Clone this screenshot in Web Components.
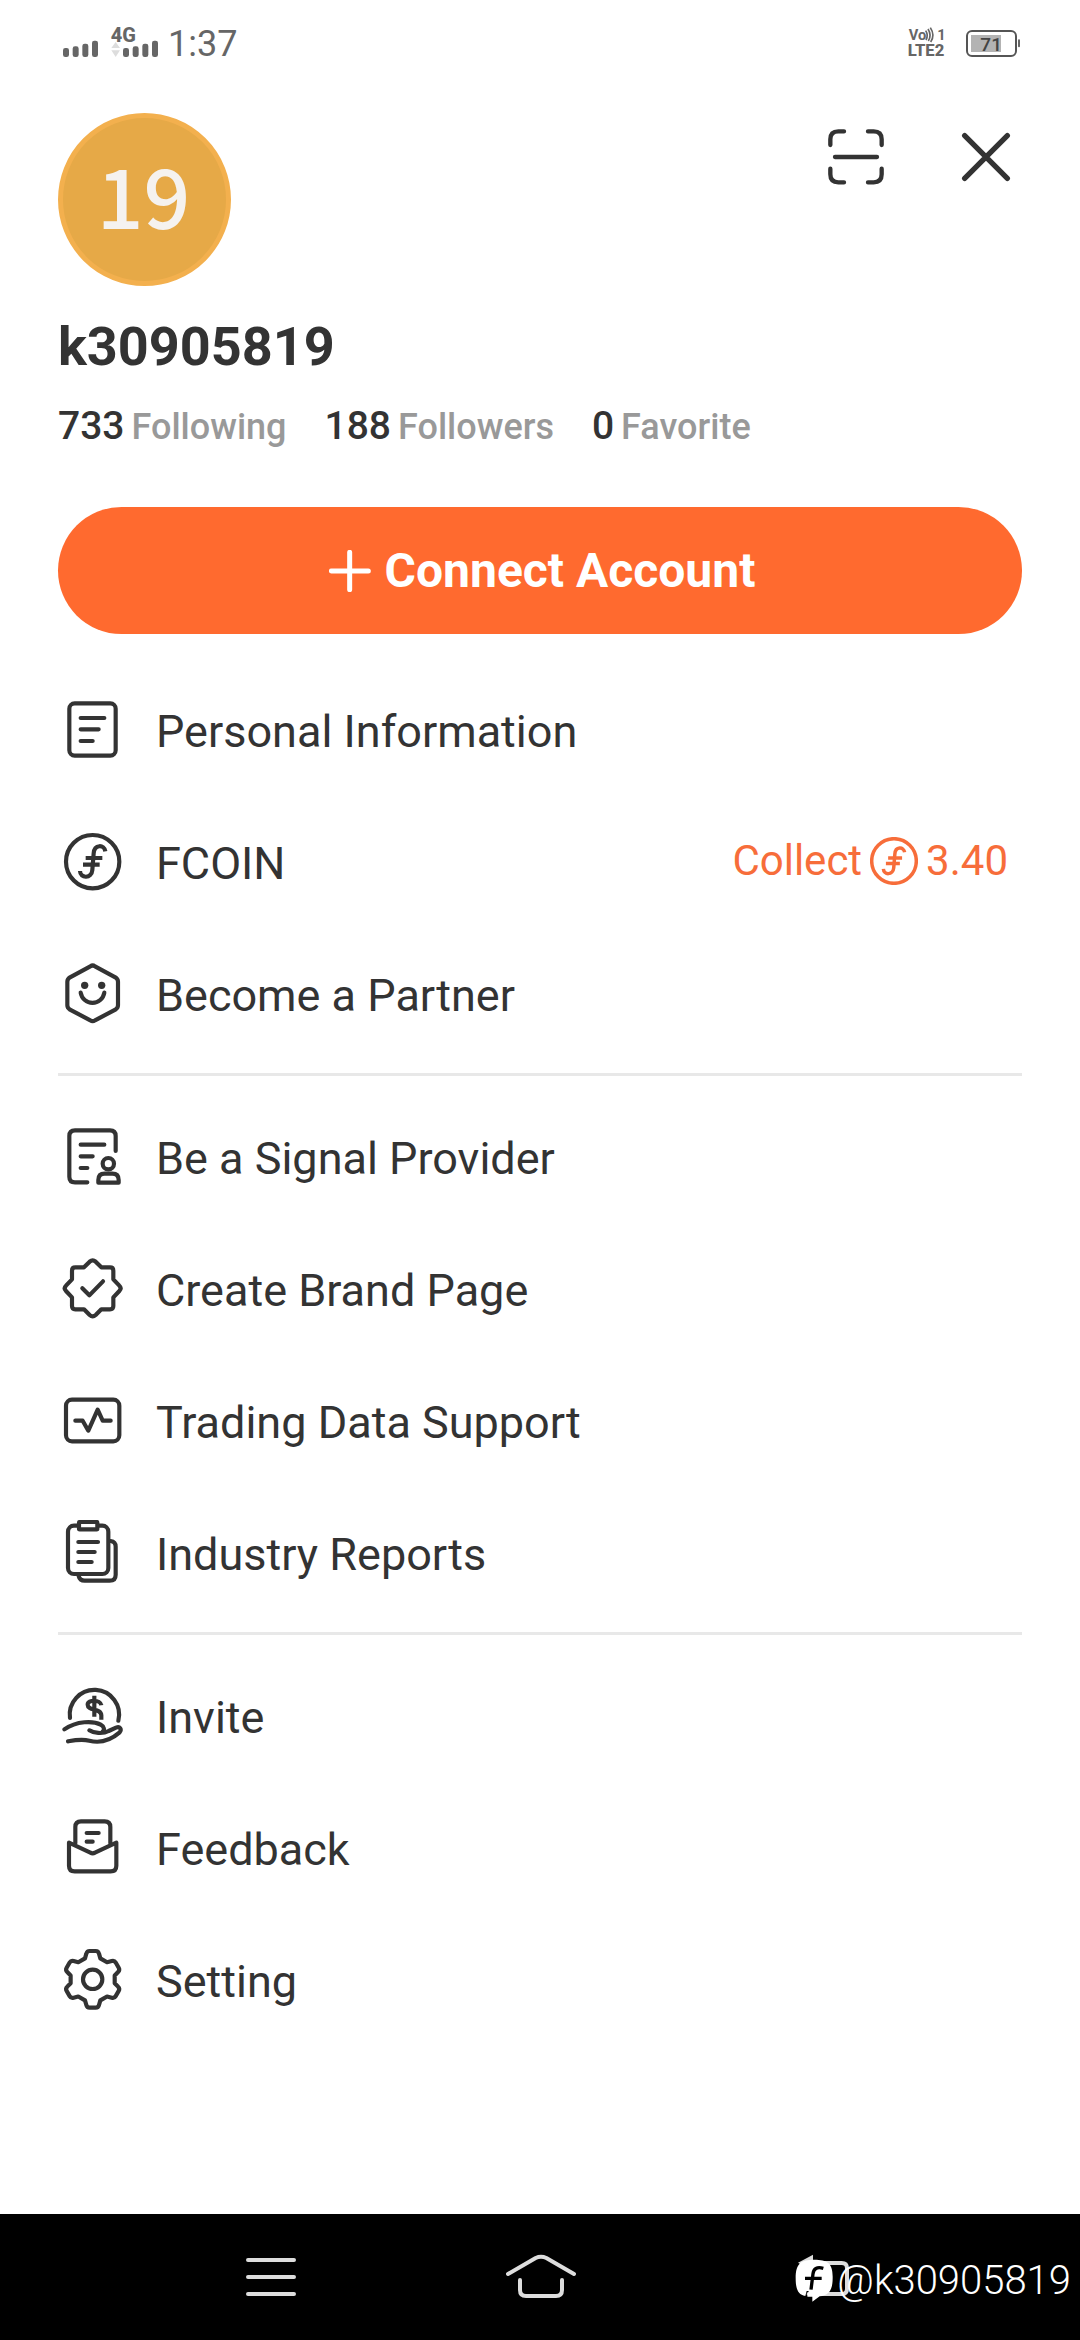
<!DOCTYPE html>
<html lang="en">
<head>
<meta charset="utf-8">
<meta name="viewport" content="width=device-width, initial-scale=1">
<title>Profile menu</title>
<style>
  html, body { margin: 0; background: #fff; }
  body { font-family: Roboto, "Noto Sans", sans-serif; color: #333; --ink: #333; --accent: #ff6a2f; --muted: #999; }
</style>
</head>
<body>
<profile-screen></profile-screen>
<script>
const define = (name, html, setup) => {
  const tpl = document.createElement('template');
  tpl.innerHTML = html;
  customElements.define(name, class extends HTMLElement {
    constructor() {
      super();
      this.attachShadow({ mode: 'open' }).append(tpl.content.cloneNode(true));
    }
    connectedCallback() { if (setup) setup(this, this.shadowRoot); }
  });
};

// Six-toothed gear outline, one tooth rotated in steps of 60 degrees.
const gearPath = (cx, cy) => {
  const tooth = [[-23, -63], [-19, -77], [-17, -85], [-9, -85], [9, -85], [17, -85], [19, -77], [23, -63]];
  let d = '';
  for (let i = 0; i < 6; i++) {
    const a = i * Math.PI / 3;
    const p = tooth.map(([x, y]) =>
      (cx + x * Math.cos(a) - y * Math.sin(a)).toFixed(1) + ' ' + (cy + x * Math.sin(a) + y * Math.cos(a)).toFixed(1));
    d += `${i ? 'L' : 'M'}${p[0]}L${p[1]}Q${p[2]} ${p[3]}L${p[4]}Q${p[5]} ${p[6]}L${p[7]}`;
  }
  return d + 'Z';
};

const coin = '<circle cx="128" cy="545" r="80"/><path d="M166 514C163 493 133 492 131 520L127 570C125 596 91 597 90 573" stroke-linecap="butt"/><path d="M107 534H157M99 554H149" stroke-linecap="butt"/>';
const ICONS = {
  personal: ['24 51 210 210', '<rect x="58" y="70" width="139" height="157" rx="16"/><path d="M92 114H163M92 148H146M92 183H128"/>'],
  fcoin: ['24 447 210 210', coin],
  coin: ['42 459 172 172', coin],
  partner: ['24 843 210 210', '<path d="M121 859Q128 854 135 859L196 892Q204 897 204 905V976Q204 984 196 989L135 1021Q128 1026 121 1021L60 989Q52 984 52 976V905Q52 897 60 892Z"/><circle cx="104" cy="916" r="11" fill="currentColor" stroke="none"/><circle cx="155" cy="916" r="11" fill="currentColor" stroke="none"/><path d="M92 938A36 37 0 0 0 163 938"/>'],
  signal: ['24 72 210 210', '<path d="M197 153V108Q197 91 180 91H75Q58 91 58 108V230Q58 247 75 247H112M92 134H163M92 169H128M92 204H112"/><circle cx="175" cy="191" r="17"/><path d="M145 248V240Q145 221 164 221H187Q206 221 206 240V248Z"/>'],
  brand: ['24 468 210 210', '<path d="M119 485Q128 477 137 485L154 502H180Q190 502 190 512V538L208 557Q216 565 208 573L190 592V618Q190 628 180 628H154L137 645Q128 653 119 645L102 628H76Q66 628 66 618V592L48 573Q40 565 48 557L66 538V512Q66 502 76 502H102Z"/><path d="M97 565L118 586L159 544"/>'],
  trading: ['24 54 210 210', '<rect x="48" y="89" width="160" height="125" rx="18"/><path d="M76 152H98L115 182L143 119L158 152H182"/>'],
  reports: ['24 450 210 210', '<path d="M182 513Q197 515 197 530V614Q197 632 179 632H104Q89 632 86 618"/><rect x="54" y="467" width="121" height="145" rx="18"/><rect x="87" y="456" width="55" height="22" rx="2" fill="#fff"/><path d="M85 516H144M85 546H134M85 576H125"/>'],
  invite: ['24 69 210 210', '<path d="M60 174A74 74 0 1 1 205 182"/><path d="M154 136C152 118 113 118 113 134C113 153 153 144 154 166V179M133 107V170" stroke-linecap="butt"/><path d="M43 208C80 182 130 182 152 194C163 200 165 210 157 216M118 211C130 219 158 223 176 213L198 203C210 198 216 208 209 217C180 242 148 250 118 242C95 236 75 240 54 244"/>'],
  feedback: ['24 465 210 210', '<path d="M76 550V501Q76 484 93 484H164Q181 484 181 501V550M110 519H146M110 545H128"/><path d="M57 548L121 578Q128 582 135 578L199 548V617Q199 634 182 634H74Q57 634 57 617Z"/>'],
  setting: ['24 861 210 210', `<path d="${gearPath(128, 958)}"/><circle cx="128" cy="958" r="29"/>`],
  scan: ['120 63 216 216', '<g stroke-width="13"><path d="M151 135V118Q151 94 175 94H192M264 94H281Q305 94 305 118V135M305 206V223Q305 247 281 247H264M192 247H175Q151 247 151 223V206M165 171H291"/></g>'],
  close: ['510 63 216 216', '<path stroke-width="16" d="M554 107L682 235M682 107L554 235"/>'],
  plus: ['28 477 126 126', '<path stroke-width="15" d="M35 540H146M90 484V596"/>'],
  recents: ['75 96 270 270', '<path stroke-width="12" d="M144 180H282M144 231H282M144 282H282"/>'],
  home: ['885 96 270 270', '<path stroke-width="12" d="M924 222L1007 174Q1023 167 1039 174L1122 222M960 240V270Q960 288 978 288H1068Q1086 288 1086 270V240"/>'],
  back: ['15 96 270 270', '<path stroke-width="12" d="M142 189H245Q261 189 261 205V266Q261 282 245 282H146"/><path stroke="none" fill="currentColor" d="M114 188L159 164V214Z"/>'],
  logo: ['102 182 117 132', '<path stroke="none" fill="#fff" d="M160 184C199 184 216 194 215 239C215 275 204 291 176 294L154 310V295H139L143 278H137L133 293C110 289 104 270 104 239C104 194 121 184 160 184Z"/><path stroke="#000" stroke-width="10" stroke-linecap="butt" d="M187 210C167 204 158 212 156 226L150 274M132 240H182"/>'],
};

define('app-icon', `
<style>
  :host { display: block; flex: none; width: var(--icon-w, 70px); height: var(--icon-h, var(--icon-w, 70px)); }
  svg { display: block; width: 100%; height: 100%; }
</style>
<svg fill="none" stroke="currentColor" stroke-width="12.5" stroke-linecap="round" stroke-linejoin="round" aria-hidden="true"></svg>`,
(el, root) => {
  const [box, body] = ICONS[el.getAttribute('name')];
  const svg = root.querySelector('svg');
  svg.setAttribute('viewBox', box);
  svg.innerHTML = body;
});

define('status-bar', `
<style>
  :host { display: flex; justify-content: space-between; align-items: center; height: 88px; padding: 0 58px; color: #666; }
  .left { display: flex; align-items: center; gap: 4px; }
  svg { display: block; height: 88px; }
  .signals { width: 106px; }
  .power { width: 122px; }
  time { font-size: 36px; line-height: 44px; }
  text { font-family: Roboto, sans-serif; fill: #666; }
</style>
<div class="left">
  <svg class="signals" viewBox="54 0 318 264">
    <g fill="#666">
      <rect x="69" y="144" width="18" height="27" rx="7"/><rect x="98" y="139" width="18" height="32" rx="7"/><rect x="127" y="131" width="18" height="40" rx="7"/><rect x="156" y="122" width="18" height="49" rx="7"/>
      <rect x="249" y="144" width="18" height="27" rx="7"/><rect x="278" y="139" width="18" height="32" rx="7"/><rect x="307" y="131" width="18" height="40" rx="7"/><rect x="336" y="122" width="18" height="49" rx="7"/>
    </g>
    <path fill="#ddd" d="M214 144L227 126L240 144ZM214 151H240L227 171Z"/>
    <text x="212" y="125" font-size="60" font-weight="800">4G</text>
  </svg>
  <time>1:37</time>
</div>
<svg class="power" viewBox="120 0 366 264">
  <text x="146" y="121" font-size="44" font-weight="700">Vo</text>
  <g fill="none" stroke="#666" stroke-width="5"><path d="M197 92Q206 106 198 120M204 87Q216 106 205 123M211 83Q226 106 212 126"/></g>
  <text x="232" y="121" font-size="44" font-weight="700">1</text>
  <text x="143" y="167" font-size="50" font-weight="800">LTE2</text>
  <rect x="321" y="93" width="147" height="75" rx="15" fill="none" stroke="#555" stroke-width="6"/>
  <rect x="333" y="105" width="90" height="51" fill="#b3b3b3"/>
  <rect x="474" y="118" width="6" height="24" rx="3" fill="#666"/>
  <text x="361" y="153" font-size="57" font-weight="500" style="fill:#444">71</text>
</svg>`);

define('user-avatar', `
<style>
  :host { display: flex; box-sizing: border-box; align-items: center; justify-content: center; width: 173px; height: 173px;
    padding: 0 2px 12px 0; border: 5px solid #f3b04e; border-radius: 50%; background: #e6a947; color: #f5f2ef;
    font: 500 82px/120px "Noto Sans CJK SC", sans-serif; }
</style>
<span><slot></slot></span>`);

define('icon-button', `
<style>
  :host { display: block; }
  button { display: block; padding: 0; border: 0; background: none; color: var(--ink); --icon-w: 72px; }
</style>
<button type="button"></button>`, (el, root) => {
  root.querySelector('button').setAttribute('aria-label', el.getAttribute('label'));
  const icon = document.createElement('app-icon');
  icon.setAttribute('name', el.getAttribute('icon'));
  root.querySelector('button').replaceChildren(icon);
});

define('stat-link', `
<style>
  :host { display: block; }
  a { display: flex; align-items: baseline; gap: 7px; color: var(--muted); text-decoration: none; font-weight: 500; font-size: 36px; line-height: 48px; }
  b { color: var(--ink); font-weight: 500; font-size: 39px; }
</style>
<a href="#"><b><slot name="count"></slot></b><span><slot></slot></span></a>`);

define('connect-button', `
<style>
  :host { display: block; }
  button { display: flex; width: 100%; height: 127px; align-items: center; justify-content: center; gap: 14px; padding: 0 0 0 4px;
    border: 0; border-radius: 64px; background: var(--accent); color: #fff; font: 700 48px/56px Roboto, sans-serif; --icon-w: 42px; }
</style>
<button type="button"><app-icon name="plus"></app-icon><span><slot></slot></span></button>`);

define('menu-item', `
<style>
  :host { display: block; }
  a { display: flex; align-items: center; gap: 28px; height: 132px; color: var(--ink); text-decoration: none; font-size: 45px; line-height: 54px; }
  .label { flex: 1; }
</style>
<a href="#"><span class="icon"></span><span class="label"><slot></slot></span><slot name="extra"></slot></a>`, (el, root) => {
  const icon = document.createElement('app-icon');
  icon.setAttribute('name', el.getAttribute('icon'));
  root.querySelector('.icon').replaceChildren(icon);
});

define('coin-reward', `
<style>
  :host { display: flex; align-items: center; gap: 8px; padding: 0 14px 6px 0; color: #f76d3a; font-size: 42px; line-height: 50px; --icon-w: 48px; }
</style>
<span>Collect</span><app-icon name="coin"></app-icon><span><slot></slot></span>`);

define('menu-group', `
<style>
  :host { display: block; }
  :host(:not(:first-of-type)) { margin-top: 11px; padding-top: 17px; border-top: 3px solid #e8e8e8; }
</style>
<slot></slot>`);

define('water-mark', `
<style>
  :host { display: flex; align-items: center; gap: 3px; color: #fff; font-size: 40px; line-height: 48px; font-weight: 300; --icon-w: 39px; --icon-h: 44px; }
</style>
<app-icon name="logo"></app-icon><span><slot></slot></span>`);

define('system-nav', `
<style>
  :host { display: block; position: relative; background: #000; }
  nav { display: grid; grid-template-columns: repeat(3, 1fr); justify-items: center; align-items: center; height: 126px; padding: 0 12.5%; }
  button { display: block; padding: 0; border: 0; background: none; color: #ddd; --icon-w: 90px; }
  water-mark { position: absolute; right: 9px; top: 43px; }
</style>
<nav aria-label="System">
  <button type="button" aria-label="Recent apps"><app-icon name="recents"></app-icon></button>
  <button type="button" aria-label="Home"><app-icon name="home"></app-icon></button>
  <button type="button" aria-label="Back"><app-icon name="back"></app-icon></button>
</nav>
<water-mark>@k30905819</water-mark>`);

define('profile-screen', `
<style>
  :host { display: flex; flex-direction: column; min-height: 100vh; }
  main { flex: 1; padding: 25px 58px 0; }
  header { display: flex; justify-content: space-between; align-items: flex-start; }
  .tools { display: flex; gap: 58px; padding-top: 8px; }
  h1 { margin: 29px 0 0; font-size: 54px; line-height: 64px; font-weight: 700; }
  .stats { display: flex; gap: 38px; margin-top: 23px; }
  connect-button { margin-top: 56px; }
  .menu { margin-top: 32px; }
</style>
<status-bar></status-bar>
<main>
  <header>
    <user-avatar>19</user-avatar>
    <div class="tools">
      <icon-button icon="scan" label="Scan"></icon-button>
      <icon-button icon="close" label="Close"></icon-button>
    </div>
  </header>
  <h1>k30905819</h1>
  <div class="stats">
    <stat-link><span slot="count">733</span>Following</stat-link>
    <stat-link><span slot="count">188</span>Followers</stat-link>
    <stat-link><span slot="count">0</span>Favorite</stat-link>
  </div>
  <connect-button>Connect Account</connect-button>
  <nav class="menu" aria-label="Profile">
    <menu-group>
      <menu-item icon="personal">Personal Information</menu-item>
      <menu-item icon="fcoin">FCOIN<coin-reward slot="extra">3.40</coin-reward></menu-item>
      <menu-item icon="partner">Become a Partner</menu-item>
    </menu-group>
    <menu-group>
      <menu-item icon="signal">Be a Signal Provider</menu-item>
      <menu-item icon="brand">Create Brand Page</menu-item>
      <menu-item icon="trading">Trading Data Support</menu-item>
      <menu-item icon="reports">Industry Reports</menu-item>
    </menu-group>
    <menu-group>
      <menu-item icon="invite">Invite</menu-item>
      <menu-item icon="feedback">Feedback</menu-item>
      <menu-item icon="setting">Setting</menu-item>
    </menu-group>
  </nav>
</main>
<system-nav></system-nav>`);
</script>
</body>
</html>
